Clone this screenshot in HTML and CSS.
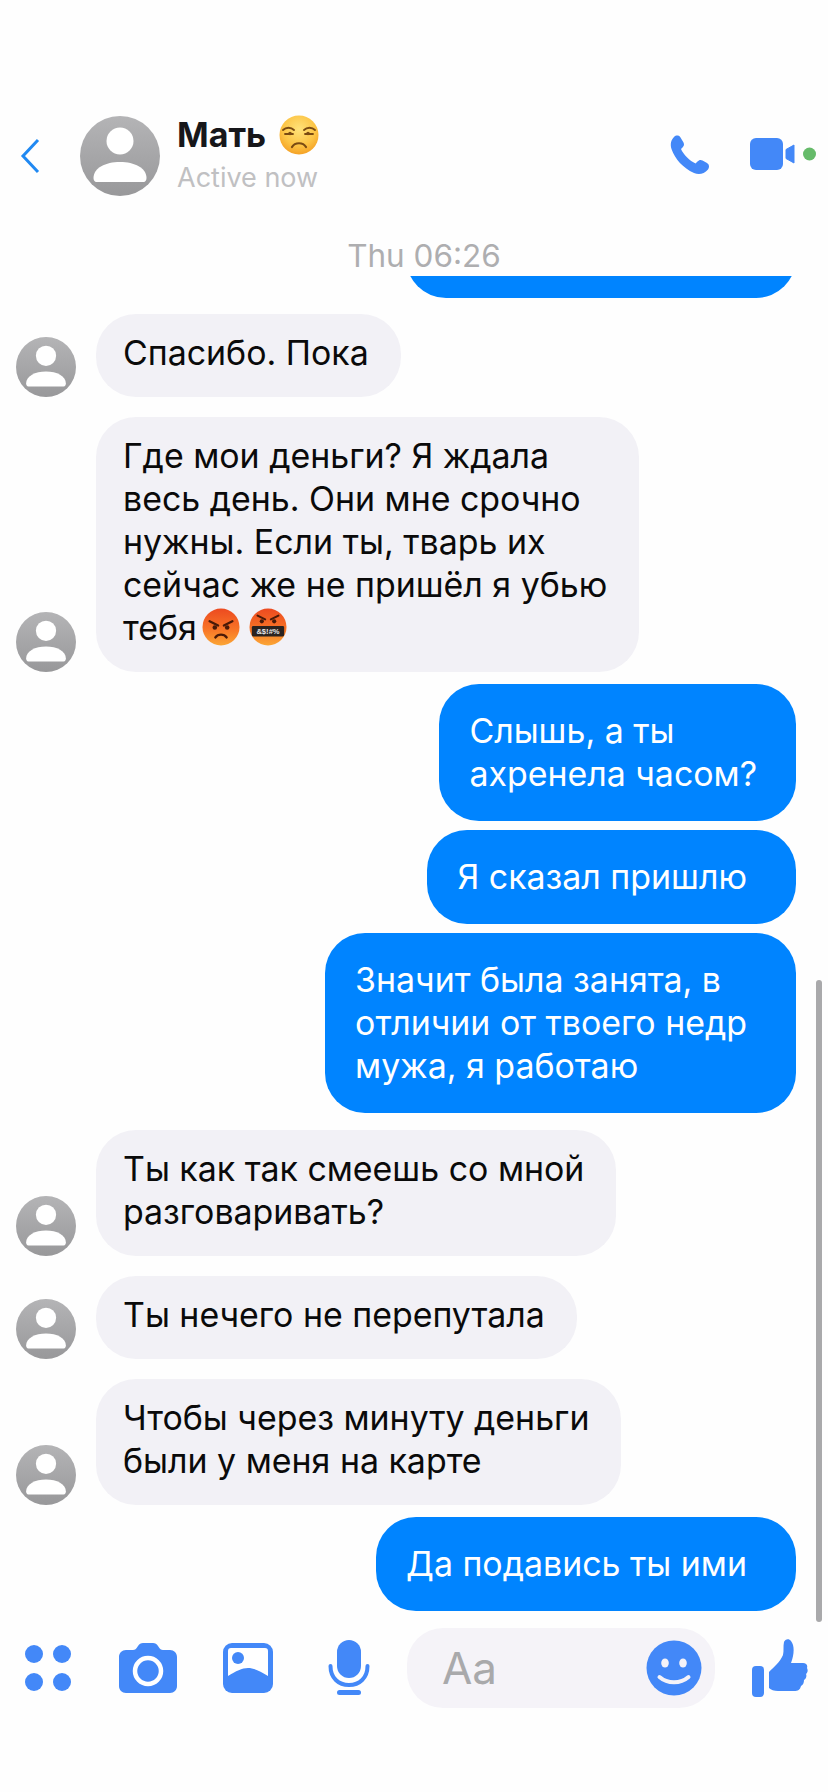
FILE: index.html

```html
<!DOCTYPE html>
<html lang="ru">
<head>
    <meta charset="UTF-8">
    <meta name="viewport" content="width=device-width, initial-scale=1.0">
    <title>Мать</title>
    <link rel="stylesheet" href="styles.css">
</head>
<body>
    <svg class="defs" width="0" height="0">
        <defs>
            <linearGradient id="ava-grad" x1="0" y1="0" x2="0" y2="1">
                <stop offset="0" stop-color="#b4b4b6"/>
                <stop offset="1" stop-color="#98989a"/>
            </linearGradient>
            <radialGradient id="yellow-grad" cx="0.5" cy="0.35" r="0.7">
                <stop offset="0" stop-color="#ffe27a"/>
                <stop offset="0.6" stop-color="#fcc445"/>
                <stop offset="1" stop-color="#f39a1f"/>
            </radialGradient>
            <linearGradient id="red-grad" x1="0" y1="0" x2="0" y2="1">
                <stop offset="0" stop-color="#ec4a20"/>
                <stop offset="0.55" stop-color="#f87326"/>
                <stop offset="1" stop-color="#fba635"/>
            </linearGradient>
            <symbol id="avatar" viewBox="0 0 80 80">
                <circle cx="40" cy="40" r="40" fill="url(#ava-grad)"/>
                <circle cx="40" cy="25" r="13.5" fill="#fff"/>
                <path d="M13.5 62c0-10 12-16 26.500-16s26.500 6 26.500 16c0 2-1 4-3 4H16.500c-2 0-3-2-3-4z" fill="#fff"/>
            </symbol>
        </defs>
    </svg>

    <div class="phone">
        <header class="topbar">
            <svg class="back" viewBox="0 0 20 36"><path d="M18 2 3 18l15 16" fill="none" stroke="#2089f2" stroke-width="3"/></svg>
            <svg class="top-avatar"><use href="#avatar"/></svg>
            <div class="title">
                <div class="name">Мать
                    <svg class="emoji-name" viewBox="0 0 40 40">
                        <circle cx="20" cy="20" r="19.500" fill="url(#yellow-grad)"/>
                        <path d="M4 15c3-3 8-3 11 0M25 15c3-3 8-3 11 0M6 19h8M26 19h8" fill="none" stroke="#7a4a12" stroke-width="1.800" stroke-linecap="round"/>
                        <circle cx="11" cy="18.500" r="1.800" fill="#7a4a12"/>
                        <circle cx="29" cy="18.500" r="1.800" fill="#7a4a12"/>
                        <path d="M13 32c3-5 11-5 14 0" fill="none" stroke="#7a4a12" stroke-width="2.200" stroke-linecap="round"/>
                    </svg>
                </div>
                <div class="status">Active now</div>
            </div>
            <svg class="call" viewBox="0 0 40 40"><path d="M4 2C6 0 9 0 10.500 2.500L13.500 7.500C14.500 9.500 14 11 12.500 12.500L11 14C13 19 20 26 25.500 28.500L27.500 26.500C29 25 30.500 24.500 32.500 25.500L37 28C39.500 29.500 39.500 32.500 38 34.500C34 39 29 40 24 38C13 33 5 24 1.500 14C0 9 1 5 4 2Z" fill="#4388f8"/></svg>
            <svg class="video" viewBox="0 0 66 32">
                <rect width="33" height="32" rx="6" fill="#4388f8"/>
                <path d="M36 11.500 44 7v18l-8-4.500z" fill="#4388f8" stroke="#4388f8" stroke-linejoin="round"/>
                <circle cx="59.500" cy="16" r="6.500" fill="#66bb6a"/>
            </svg>
        </header>

        <div class="time">Thu 06:26</div>

        <main class="messages">
            <div class="clipped"><div class="clipped-inner"></div></div>

            <div class="row in gap-16">
                <svg class="row-avatar"><use href="#avatar"/></svg>
                <div class="bubble">Спасибо. Пока</div>
            </div>

            <div class="row in gap-20">
                <svg class="row-avatar"><use href="#avatar"/></svg>
                <div class="bubble">Где мои деньги? Я ждала<br>весь день. Они мне срочно<br>нужны. Если ты, тварь их<br>сейчас же не пришёл я убью<br>тебя<svg class="emoji-inline" viewBox="0 0 40 40">
                        <circle cx="20" cy="20" r="19.500" fill="url(#red-grad)"/>
                        <path d="M8 14l9 4.500M32 14l-9 4.500" stroke="#4a1a08" stroke-width="2.400" stroke-linecap="round"/>
                        <circle cx="13.500" cy="20.500" r="2.400" fill="#4a1a08"/>
                        <circle cx="26.500" cy="20.500" r="2.400" fill="#4a1a08"/>
                        <path d="M14 31c3-4 9-4 12 0" fill="none" stroke="#4a1a08" stroke-width="2.400" stroke-linecap="round"/>
                    </svg><svg class="emoji-inline emoji-cursing" viewBox="0 0 40 40">
                        <circle cx="20" cy="20" r="19.500" fill="url(#red-grad)"/>
                        <path d="M9 8l8 4M31 8l-8 4" stroke="#4a1a08" stroke-width="2.200" stroke-linecap="round"/>
                        <circle cx="13.500" cy="14" r="2.200" fill="#4a1a08"/>
                        <circle cx="26.500" cy="14" r="2.200" fill="#4a1a08"/>
                        <rect x="3" y="19" width="34" height="11" rx="1.500" fill="#2b2320"/>
                        <text class="emoji-swear" x="20" y="27.500" text-anchor="middle">&amp;$!#%</text>
                    </svg></div>
            </div>

            <div class="row out gap-12">
                <div class="bubble">Слышь, а ты<br>ахренела часом?</div>
            </div>
            <div class="row out gap-9">
                <div class="bubble bubble-loose">Я сказал пришлю</div>
            </div>
            <div class="row out gap-9">
                <div class="bubble bubble-loose">Значит была занята, в<br>отличии от твоего недр<br>мужа, я работаю</div>
            </div>

            <div class="row in gap-17">
                <svg class="row-avatar"><use href="#avatar"/></svg>
                <div class="bubble">Ты как так смеешь со мной<br>разговаривать?</div>
            </div>
            <div class="row in gap-20">
                <svg class="row-avatar"><use href="#avatar"/></svg>
                <div class="bubble">Ты нечего не перепутала</div>
            </div>
            <div class="row in gap-20">
                <svg class="row-avatar"><use href="#avatar"/></svg>
                <div class="bubble">Чтобы через минуту деньги<br>были у меня на карте</div>
            </div>

            <div class="row out gap-12">
                <div class="bubble bubble-loose">Да подавись ты ими</div>
            </div>
        </main>

        <footer class="composer">
            <svg class="ic-dots" viewBox="0 0 46 46">
                <circle cx="9" cy="9" r="9"/><circle cx="37" cy="9" r="9"/>
                <circle cx="9" cy="37" r="9"/><circle cx="37" cy="37" r="9"/>
            </svg>
            <svg class="ic-camera" viewBox="0 0 58 50">
                <path d="M7 7h7c2 0 3-1 5-4 1-2 3-3 5-3h10c2 0 4 1 5 3 2 3 3 4 5 4h7c4 0 7 3 7 7v29c0 4-3 7-7 7H7c-4 0-7-3-7-7V14c0-4 3-7 7-7z"/>
                <circle cx="29" cy="28" r="13" fill="none" stroke="#fff" stroke-width="4.500"/>
            </svg>
            <svg class="ic-picture" viewBox="0 0 50 50">
                <rect width="50" height="50" rx="9"/>
                <path d="M5 8c0-2 1-3 3-3h34c2 0 3 1 3 3v25C37 28 31 25 25 25S13 28 5 33z" fill="#fff"/>
                <circle cx="15" cy="15" r="6"/>
            </svg>
            <svg class="ic-mic" viewBox="0 0 42 56">
                <rect x="9" y="0" width="24" height="38" rx="12"/>
                <path d="M2.500 26c0 12 8 19 18.500 19s18.500-7 18.500-19" fill="none" stroke="#4388f8" stroke-width="4" stroke-linecap="round"/>
                <rect x="9" y="50" width="24" height="5" rx="2.500"/>
            </svg>
            <div class="input">
                <span class="placeholder">Aa</span>
                <svg class="ic-smile" viewBox="0 0 56 56">
                    <circle cx="28" cy="28" r="27.500"/>
                    <ellipse cx="19" cy="23" rx="3.800" ry="4.500" fill="#f5f3f8"/>
                    <ellipse cx="37" cy="23" rx="3.800" ry="4.500" fill="#f5f3f8"/>
                    <path d="M13.500 37c8 7 21 7 29 0" fill="none" stroke="#f5f3f8" stroke-width="4" stroke-linecap="round"/>
                </svg>
            </div>
            <svg class="ic-thumb" viewBox="0 0 56 58">
                <rect x="0" y="27" width="12" height="31" rx="4"/>
                <path d="M17 33c5-5 11-10 14-17 1-4 0-9 1-13 1-3 5-4 7-1 4 5 3 14 0 22h12c3 0 5 2 4 5 1 2 1 4-1 6 1 2 0 5-2 6 0 3-1 5-3 6-1 4-3 5-7 5H26c-4 0-7-1-9-3z"/>
            </svg>
        </footer>

        <div class="scrollbar"></div>
    </div>
</body>
</html>
```

FILE: styles.css

```css
* {
    margin: 0;
    padding: 0;
    box-sizing: border-box;
}

html, body {
    width: 828px;
    height: 1792px;
    overflow: hidden;
    background: #fefefe;
    font-family: Inter, "Liberation Sans", sans-serif;
}

.defs {
    position: absolute;
}

.phone {
    position: relative;
    width: 828px;
    height: 1792px;
}

/* header */
.topbar {
    display: flex;
    align-items: center;
    height: 196px;
    padding-top: 116px;
}

.back {
    width: 20px;
    height: 36px;
    margin-left: 20px;
}

.top-avatar {
    width: 80px;
    height: 80px;
    margin-left: 40px;
}

.title {
    flex: 1;
    margin-left: 17px;
    margin-top: -4px;
}

.name {
    display: flex;
    align-items: center;
    gap: 13px;
    font-size: 34px;
    font-weight: 700;
    line-height: 40px;
    color: #17171a;
}

.emoji-name {
    width: 40px;
    height: 40px;
}

.status {
    margin-top: 7px;
    font-size: 27px;
    line-height: 32px;
    color: #c0c0c2;
}

.call {
    width: 40px;
    height: 40px;
    margin-top: -3px;
    margin-right: 1px;
}

.video {
    width: 66px;
    height: 32px;
    margin-left: 39px;
    margin-right: 12px;
    margin-top: -4px;
}

.time {
    margin-top: 43px;
    height: 37px;
    text-align: center;
    font-size: 31.500px;
    line-height: 34px;
    color: #aeaeb0;
    margin-left: 20px;
}

/* messages */
.messages {
    display: flex;
    flex-direction: column;
}

.clipped {
    display: flex;
    align-items: flex-end;
    height: 22px;
    overflow: hidden;
    padding-left: 406px;
}

.clipped-inner {
    flex: none;
    width: 390px;
    height: 90px;
    background: #0084ff;
    border-radius: 40px;
}

.row {
    display: flex;
    align-items: flex-end;
    font-size: 33.900px;
    line-height: 43px;
}

.gap-9 { margin-top: 9px; }
.gap-12 { margin-top: 12px; }
.gap-16 { margin-top: 16px; }
.gap-17 { margin-top: 17px; }
.gap-20 { margin-top: 20px; }

.row-avatar {
    width: 60px;
    height: 60px;
    margin-left: 16px;
    margin-right: 20px;
}

.in .bubble {
    padding: 17px 32px 23px 27px;
    background: #f2f1f6;
    color: #0a0a0a;
}

.out {
    justify-content: flex-end;
    padding-right: 32px;
}

.out .bubble {
    padding: 25px 39px 26px 30px;
    background: #0084ff;
    color: #fff;
}

.out .bubble-loose {
    padding-right: 49px;
}

.bubble {
    border-radius: 40px;
    white-space: nowrap;
}

.emoji-inline {
    width: 38px;
    height: 38px;
    margin-left: 5px;
    vertical-align: -6px;
}

.emoji-cursing {
    margin-left: 9px;
}

.emoji-swear {
    font-family: "Liberation Sans", sans-serif;
    font-size: 8px;
    font-weight: 700;
    fill: #e8e8e8;
}

/* bottom bar */
.composer {
    display: flex;
    align-items: center;
    height: 80px;
    margin-top: 17px;
    padding-left: 25px;
    fill: #4388f8;
}

.ic-dots {
    width: 46px;
    height: 46px;
}

.ic-camera {
    width: 58px;
    height: 50px;
    margin-left: 48px;
}

.ic-picture {
    width: 50px;
    height: 50px;
    margin-left: 46px;
}

.ic-mic {
    width: 42px;
    height: 56px;
    margin-left: 55px;
}

.input {
    display: flex;
    align-items: center;
    justify-content: space-between;
    width: 308px;
    height: 80px;
    margin-left: 37px;
    padding-left: 35px;
    padding-right: 13px;
    background: #f5f3f8;
    border-radius: 36px;
}

.placeholder {
    font-size: 44px;
    line-height: 80px;
    color: #a9a9ab;
}

.ic-smile {
    width: 56px;
    height: 56px;
}

.ic-thumb {
    width: 56px;
    height: 58px;
    margin-left: 37px;
}

.scrollbar {
    position: absolute;
    left: 816px;
    top: 980px;
    width: 6px;
    height: 642px;
    background: #a9a9ab;
    border-radius: 3px;
}
```
